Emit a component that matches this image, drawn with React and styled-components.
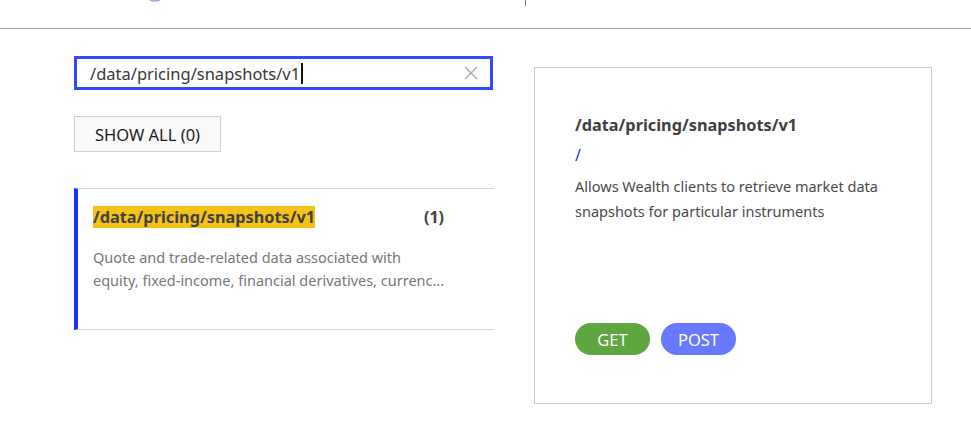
import styled, { createGlobalStyle } from 'styled-components';

const GlobalStyle = createGlobalStyle`
  body {
    margin: 0;
    background: #fff;
    font-family: "Noto Sans", "Open Sans", sans-serif;
    color: #404040;
  }
`;

const Header = styled.header`
  height: 28px;
  border-bottom: 1px solid #a8a8a8;
  display: flex;
  align-items: flex-start;
  overflow: hidden;
`;

const Logo = styled.svg`
  margin-left: 144px;
  margin-top: -20px;
`;

const HeaderDivider = styled.div`
  width: 1px;
  height: 6px;
  background: #777;
  margin-left: 359px;
`;

const Main = styled.main`
  display: flex;
  align-items: flex-start;
  gap: 40px;
  padding: 27px 0 0 74px;
`;

const LeftColumn = styled.div`
  width: 420px;
  display: flex;
  flex-direction: column;
  align-items: flex-start;
`;

const SearchBox = styled.div`
  box-sizing: border-box;
  width: 419px;
  height: 34px;
  border: 3px solid #3349ff;
  display: flex;
  align-items: center;
  padding: 0 12px 0 13px;
  font-size: 16.5px;
  color: #383838;
`;

const SearchText = styled.span`
  flex: 1;
  display: flex;
  align-items: center;
  white-space: nowrap;
`;

const Caret = styled.span`
  display: inline-block;
  width: 2px;
  height: 21px;
  background: #111;
  margin-left: 1px;
`;

const ClearIcon = styled.svg`
  flex-shrink: 0;
`;

const ShowAllButton = styled.button`
  margin-top: 26px;
  height: 36px;
  width: 147px;
  border: 1px solid #cfcfcf;
  background: #fafafa;
  font-family: inherit;
  font-size: 16.5px;
  color: #1a1a1a;
  padding: 0;
`;

const ListItem = styled.div`
  box-sizing: border-box;
  margin-top: 36px;
  width: 420px;
  border-top: 1px solid #d6d6d6;
  border-bottom: 1px solid #d6d6d6;
  border-left: 4px solid #1530ff;
  padding: 17px 50px 37px 15px;
`;

const ItemHead = styled.div`
  display: flex;
  justify-content: space-between;
  align-items: center;
`;

const Highlight = styled.span`
  background: #f5c218;
  font-weight: 700;
  font-size: 16.3px;
  line-height: 22px;
  color: #404040;
`;

const Count = styled.span`
  font-weight: 700;
  font-size: 16px;
  color: #404040;
`;

const ItemDesc = styled.p`
  margin: 18px 0 0;
  font-size: 14.5px;
  line-height: 23px;
  color: #777;
  white-space: pre;
`;

const DetailCard = styled.section`
  box-sizing: border-box;
  margin-top: 11px;
  width: 398px;
  height: 337px;
  border: 1px solid #cccccc;
  padding: 46px 40px 0;
  display: flex;
  flex-direction: column;
`;

const DetailTitle = styled.h3`
  margin: 0;
  font-size: 16.3px;
  line-height: 22px;
  font-weight: 700;
  color: #404040;
`;

const DetailPath = styled.div`
  margin-top: 8px;
  font-size: 16px;
  line-height: 22px;
  color: #1530ff;
`;

const DetailDesc = styled.p`
  margin: 8px 0 0;
  font-size: 14.5px;
  line-height: 25px;
  color: #4a4a4a;
`;

const Methods = styled.div`
  display: flex;
  gap: 11px;
  margin-top: 99px;
`;

const MethodPill = styled.span`
  width: 75px;
  height: 32px;
  border-radius: 16px;
  background: ${p => p.$color};
  color: #fff;
  font-size: 16.5px;
  display: flex;
  align-items: center;
  justify-content: center;
`;

export default function App() {
  return (
    <>
      <GlobalStyle />
      <Header>
        <Logo width="22" height="22" viewBox="0 0 22 22">
          <circle cx="11" cy="11" r="10" fill="none" stroke="#8c9bff" strokeWidth="1.5" />
          <circle cx="11" cy="11" r="6" fill="none" stroke="#b4bfff" strokeWidth="1" />
        </Logo>
        <HeaderDivider />
      </Header>
      <Main>
        <LeftColumn>
          <SearchBox>
            <SearchText>
              /data/pricing/snapshots/v1
              <Caret />
            </SearchText>
            <ClearIcon width="14" height="14" viewBox="0 0 14 14">
              <path d="M1 1L13 13M13 1L1 13" stroke="#a9a9a9" strokeWidth="1.4" fill="none" />
            </ClearIcon>
          </SearchBox>
          <ShowAllButton>SHOW ALL (0)</ShowAllButton>
          <ListItem>
            <ItemHead>
              <Highlight>/data/pricing/snapshots/v1</Highlight>
              <Count>(1)</Count>
            </ItemHead>
            <ItemDesc>
              {'Quote and trade-related data associated with\nequity, fixed-income, financial derivatives, currenc...'}
            </ItemDesc>
          </ListItem>
        </LeftColumn>
        <DetailCard>
          <DetailTitle>/data/pricing/snapshots/v1</DetailTitle>
          <DetailPath>/</DetailPath>
          <DetailDesc>
            Allows Wealth clients to retrieve market data snapshots for particular instruments
          </DetailDesc>
          <Methods>
            <MethodPill $color="#5ea63f">GET</MethodPill>
            <MethodPill $color="#6979ff">POST</MethodPill>
          </Methods>
        </DetailCard>
      </Main>
    </>
  );
}
